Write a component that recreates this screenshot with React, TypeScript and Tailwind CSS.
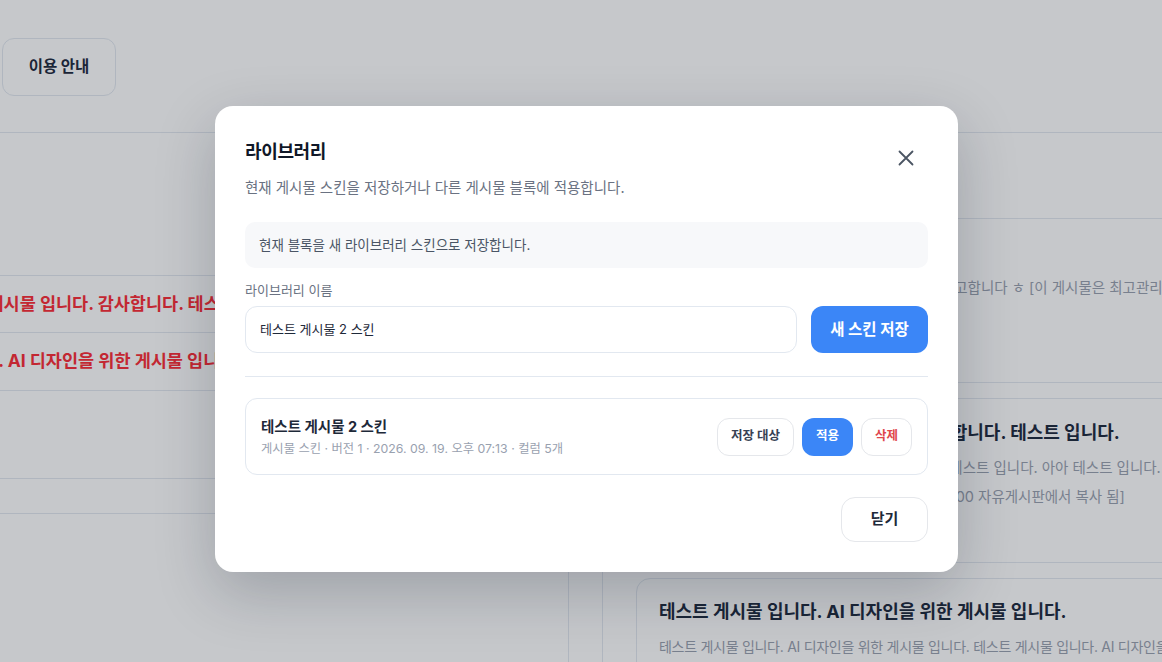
import React from "react";

const FONT = "[font-family:Inter,'Noto_Sans_CJK_KR',sans-serif]";

function CloseIcon() {
  return (
    <svg width="16" height="16" viewBox="0 0 16 16" fill="none" aria-hidden="true">
      <path d="M1.5 1.5L14.5 14.5M14.5 1.5L1.5 14.5" stroke="#4b5563" strokeWidth="1.8" strokeLinecap="round" />
    </svg>
  );
}

function BoardPage() {
  return (
    <div className="flex h-full flex-col">
      <header className="h-[133px] shrink-0 border-b border-slate-200 pl-[2px] pt-[38px]">
        <button className="h-[58px] w-[114px] rounded-[12px] border border-slate-200 text-[15.5px] font-bold text-slate-800">
          이용 안내
        </button>
      </header>
      <div className="flex flex-1">
        {/* list column */}
        <div className="w-[569px] shrink-0 overflow-hidden border-r border-slate-200">
          <div className="h-[143px] border-b border-slate-200" />
          <div className="flex h-[57px] items-center border-b border-slate-200">
            <p className="-ml-[65px] whitespace-nowrap text-[17.5px] font-bold text-red-500">
              테스트 게시물 입니다. 감사합니다. 테스트 입니다.
            </p>
          </div>
          <div className="flex h-[58px] items-center border-b border-slate-200">
            <p className="-ml-[155px] whitespace-nowrap text-[17.5px] font-bold text-red-500">
              테스트 게시물 입니다. AI 디자인을 위한 게시물 입니다.
            </p>
          </div>
          <div className="h-[88px] border-b border-slate-200" />
          <div className="h-[35px] border-b border-slate-200" />
        </div>
        <div className="w-[34px] shrink-0 border-r border-slate-200" />
        {/* preview column */}
        <div className="min-w-0 flex-1 overflow-hidden">
          <div className="h-[86px] border-b border-slate-200" />
          <div className="h-[164px] border-b border-slate-200 pl-[25px] pt-[59px]">
            <p className="whitespace-nowrap text-[14.5px] leading-[20px] text-gray-400">
              테스트 게시물 입니다. 자세한 내용은 첨부된 본문을 참고합니다 ㅎ [이 게시물은 최고관리자님에 의해 복사 됨]
            </p>
          </div>
          <div className="flex flex-col gap-[15px] pl-[33px] pt-[15px]">
            <article className="h-[165px] w-[640px] rounded-[14px] border border-slate-200 px-[22px] pt-[21px]">
              <h3 className="whitespace-nowrap text-[18px] font-bold leading-[26px] text-slate-800">
                테스트 게시물 입니다. 게시물 확인 감사합니다. 테스트 입니다.
              </h3>
              <div className="mt-[7px] whitespace-nowrap text-[14.5px] leading-[29px] text-gray-400">
                <p>테스트 게시물 입니다. 아아 테스트 입니다. 아아 테스트 입니다. 아아 테스트 입니다. [이 게</p>
                <p>시물은 최고관리자님에 의해 2026-09-19 19:13:00 자유게시판에서 복사 됨]</p>
              </div>
            </article>
            <article className="h-[120px] w-[640px] rounded-[14px] border border-slate-200 px-[22px] pt-[20px]">
              <h3 className="whitespace-nowrap text-[18px] font-bold leading-[26px] text-slate-800">
                테스트 게시물 입니다. AI 디자인을 위한 게시물 입니다.
              </h3>
              <p className="mt-[7px] whitespace-nowrap text-[14px] leading-[29px] tracking-[-0.02em] text-gray-400">
                테스트 게시물 입니다. AI 디자인을 위한 게시물 입니다. 테스트 게시물 입니다. AI 디자인을 위한 게시물 입니다.
              </p>
            </article>
          </div>
        </div>
      </div>
    </div>
  );
}

function LibraryDialog() {
  return (
    <div className="absolute left-[215px] top-[106px] w-[743px] rounded-[18px] bg-white px-[30px] pb-[30px] pt-[32px] shadow-[0_20px_60px_rgba(15,23,42,0.22)]">
      <div className="flex items-start justify-between">
        <div>
          <h2 className="text-[18px] font-bold leading-[28px] tracking-[-0.02em] text-gray-900">라이브러리</h2>
          <p className="mt-[12px] text-[14.5px] leading-[20px] text-gray-500">
            현재 게시물 스킨을 저장하거나 다른 게시물 블록에 적용합니다.
          </p>
        </div>
        <button className="mr-[14px] mt-[12px] flex h-[16px] w-[16px] items-center justify-center" aria-label="닫기">
          <CloseIcon />
        </button>
      </div>

      <div className="mt-[24px] flex h-[46px] items-center rounded-[10px] bg-[#f7f8fa] px-[14px] text-[13.5px] text-gray-600">
        현재 블록을 새 라이브러리 스킨으로 저장합니다.
      </div>

      <label className="mt-[13px] block text-[13px] leading-[18px] text-gray-500">라이브러리 이름</label>
      <div className="mt-[7px] flex gap-[14px]">
        <div className="flex h-[47px] flex-1 items-center rounded-[12px] border border-slate-200 px-[14px] text-[13px] text-gray-800">
          테스트 게시물 2 스킨
        </div>
        <button className="h-[47px] w-[117px] rounded-[12px] bg-[#3b86f7] text-[15.5px] font-bold text-white">
          새 스킨 저장
        </button>
      </div>

      <div className="mt-[23px] border-t border-slate-200" />

      <div className="mt-[21px] flex h-[77px] items-center justify-between rounded-[12px] border border-slate-200 pl-[15px] pr-[15px]">
        <div>
          <div className="text-[14.5px] font-bold leading-[22px] text-gray-800">테스트 게시물 2 스킨</div>
          <div className="mt-[2px] text-[12.3px] leading-[18px] text-gray-400">
            게시물 스킨 · 버전 1 · 2026. 09. 19. 오후 07:13 · 컬럼 5개
          </div>
        </div>
        <div className="flex items-center gap-[8px]">
          <button className="h-[38px] w-[77px] rounded-[12px] border border-gray-200 text-[12.5px] font-semibold text-gray-700">
            저장 대상
          </button>
          <button className="h-[38px] w-[51px] rounded-[12px] bg-[#3b86f7] text-[12.5px] font-semibold text-white">
            적용
          </button>
          <button className="h-[38px] w-[51px] rounded-[12px] border border-gray-200 text-[12.5px] font-semibold text-[#e0474c]">
            삭제
          </button>
        </div>
      </div>

      <div className="mt-[22px] flex justify-end">
        <button className="h-[45px] w-[87px] rounded-[14px] border border-gray-200 text-[15px] font-bold text-gray-800">
          닫기
        </button>
      </div>
    </div>
  );
}

export default function App() {
  return (
    <div className={`relative h-[662px] w-[1162px] overflow-hidden bg-white ${FONT}`}>
      <BoardPage />
      <div className="absolute inset-0 bg-[rgba(17,24,39,0.24)]" />
      <LibraryDialog />
    </div>
  );
}
